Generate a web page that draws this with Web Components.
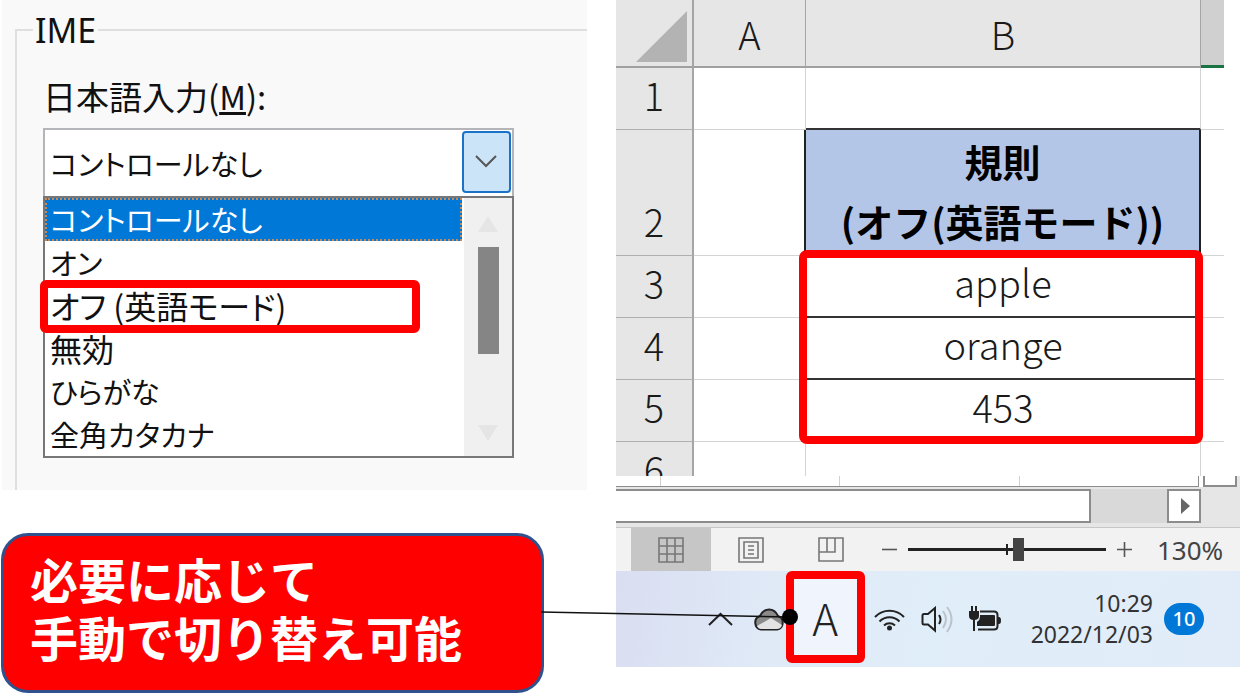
<!DOCTYPE html>
<html lang="ja">
<head>
<meta charset="utf-8">
<title>IME</title>
<style>
  * { box-sizing: border-box; }
  body {
    margin: 0;
    background: #fff;
    color: #1a1a1a;
    font-family: "Noto Sans CJK JP", sans-serif;
  }
  main {
    display: grid;
    grid-template-columns: 587fr 624fr;
    column-gap: 29px;
    align-items: start;
    overflow: hidden;
  }
  .left { position: relative; z-index: 1; min-width: 0; }
  .right { min-width: 0; }
</style>
</head>
<body>
<main>
  <div class="left">
    <ime-panel></ime-panel>
    <note-callout>必要に応じて<br>手動で切り替え可能</note-callout>
  </div>
  <div class="right">
    <sheet-grid></sheet-grid>
    <sheet-scroll></sheet-scroll>
    <status-bar></status-bar>
    <task-bar></task-bar>
  </div>
</main>

<script>
class ImePanel extends HTMLElement {
  connectedCallback() {
    this.attachShadow({ mode: 'open' });
    this.shadowRoot.innerHTML = `
      <style>
        * { box-sizing: border-box; }
        :host {
          display: block;
          margin-left: 2px;
          padding: 11px 0 0 13px;
          background: #f9f9f9;
          color: #111;
          font-size: 33px;
        }
        fieldset {
          margin: 0;
          padding: 27px 0 32px 26px;
          border: 2px solid #dfdfdf;
          border-width: 2px 0 0 2px;
          min-width: 0;
        }
        legend {
          margin-left: -10px;
          padding: 0 2px;
          font: 34px/38px "Noto Sans", sans-serif;
        }
        label { display: block; line-height: 40px; margin-bottom: 12px; }
        .field { position: relative; width: 471px; max-width: 100%; }
        select {
          display: block;
          width: 100%;
          height: 68px;
          padding: 0 60px 0 5px;
          appearance: none;
          border: 2px solid #b3b5b9;
          border-bottom: 0;
          border-radius: 0;
          background: #fff;
          color: inherit;
          font: 29px/40px "Noto Sans CJK JP", sans-serif;
          font-feature-settings: "palt";
        }
        .arrow {
          position: absolute;
          top: 3px;
          right: 3px;
          width: 49px;
          height: 62px;
          border: 2px solid #1a73c7;
          border-radius: 4px;
          background: #cce4f7;
          pointer-events: none;
        }
        .drop {
          display: flex;
          width: 471px;
          max-width: 100%;
          border: 2px solid #777;
          background: #fff;
        }
        ul {
          flex: 1;
          margin: 0;
          padding: 0;
          list-style: none;
          font-size: 29px;
          font-feature-settings: "palt";
        }
        li {
          position: relative;
          height: 43px;
          padding-left: 5px;
          line-height: 43px;
          white-space: nowrap;
        }
        .kanji { font-size: 32px; }
        li[aria-selected="true"] {
          background: #0078d7;
          color: #fff;
          outline: 2px dotted #c98a5a;
          outline-offset: -2px;
        }
        .mark {
          position: absolute;
          top: -4px;
          left: -5px;
          width: 380px;
          height: 53px;
          border: 8px solid #f00;
          border-radius: 6px;
        }
        .scroll {
          display: flex;
          flex-direction: column;
          align-items: center;
          width: 48px;
          margin-left: 2px;
          padding: 17px 0 14px;
          background: #f0f0f0;
        }
        .thumb { width: 21px; height: 107px; margin: 14px 0 auto; background: #858585; }
      </style>
      <fieldset>
        <legend>IME</legend>
        <label for="mode">日本語入力(<u>M</u>):</label>
        <div class="field">
          <select id="mode"><option>コントロールなし</option></select>
          <svg class="arrow" viewBox="0 0 45 58" aria-hidden="true">
            <path d="M12 23l10 10 10-10" fill="none" stroke="#555" stroke-width="2"/>
          </svg>
        </div>
        <div class="drop">
          <ul role="listbox" aria-label="日本語入力">
            <li role="option" aria-selected="true">コントロールなし</li>
            <li role="option">オン</li>
            <li role="option" class="kanji">オフ (英語モード)<span class="mark"></span></li>
            <li role="option" class="kanji">無効</li>
            <li role="option">ひらがな</li>
            <li role="option">全角カタカナ</li>
          </ul>
          <div class="scroll">
            <svg width="22" height="18"><path d="M1 17L11 1l10 16z" fill="#e5e5e5"/></svg>
            <div class="thumb"></div>
            <svg width="22" height="18"><path d="M1 1h20L11 17z" fill="#e5e5e5"/></svg>
          </div>
        </div>
      </fieldset>
    `;
  }
}
customElements.define('ime-panel', ImePanel);

class NoteCallout extends HTMLElement {
  connectedCallback() {
    this.attachShadow({ mode: 'open' });
    this.shadowRoot.innerHTML = `
      <style>
        :host {
          display: block;
          position: relative;
          box-sizing: border-box;
          margin: 43px 43px 0 1px;
          padding: 18px 0 20px 26px;
          border: 3px solid #2f528f;
          border-radius: 27px;
          background: #f00;
          color: #fff;
          font-family: "Liberation Sans", "Noto Sans CJK JP", sans-serif;
          font-size: 48px;
          font-weight: 700;
          line-height: 58px;
          white-space: nowrap;
        }
        svg { position: absolute; top: 68px; left: 100%; }
      </style>
      <slot></slot>
      <svg width="260" height="26" aria-hidden="true">
        <path d="M0 8L249 13" stroke="#111" stroke-width="1.4"/>
        <circle cx="249" cy="13" r="8" fill="#000"/>
      </svg>
    `;
  }
}
customElements.define('note-callout', NoteCallout);

class SheetGrid extends HTMLElement {
  connectedCallback() {
    this.attachShadow({ mode: 'open' });
    this.shadowRoot.innerHTML = `
      <style>
        * { box-sizing: border-box; }
        :host {
          display: block;
          height: 476px;
          margin-right: 16px;
          overflow: hidden;
          font-size: 38px;
          font-weight: 300;
        }
        table { width: 100%; table-layout: fixed; border-collapse: separate; border-spacing: 0; }
        .c0 { width: 78px; }
        .c1 { width: 112px; }
        .c3 { width: 23px; }
        tr { height: 62px; }
        thead tr { height: 68px; }
        th, td { padding: 0 0 8px; line-height: 52px; text-align: center; vertical-align: bottom; }
        th {
          background: #e6e6e6;
          font-weight: 300;
          border-right: 2px solid #a5a5a5;
          border-bottom: 1px solid #b0b0b0;
        }
        thead th { padding: 0; border-bottom: 2px solid #a0a0a0; border-right-width: 1px; line-height: 64px; }
        thead th:first-child { border-right-width: 2px; }
        thead th.next { background: #d0d0d0; border-right: 0; border-bottom: 3px solid #1a7343; }
        .corner svg { display: block; margin: 0 4px 4px auto; }
        td { border-right: 1px solid #d4d4d4; border-bottom: 1px solid #d4d4d4; }
        td:last-child { border-right: 0; }
        .dark-bottom { border-bottom: 2px solid #333; }
        .dark-right { border-right: 2px solid #222; }
        .title { height: 126px; padding-bottom: 4px; background: #b4c6e7; color: #000; font-weight: 700; line-height: 60px; }
        .first { position: relative; }
        .mark {
          position: absolute;
          top: -6px;
          left: -7px;
          right: -3px;
          height: 194px;
          border: 8px solid #f00;
          border-radius: 8px;
        }
      </style>
      <table>
        <colgroup><col class="c0"><col class="c1"><col><col class="c3"></colgroup>
        <thead>
          <tr>
            <th class="corner"><svg width="52" height="51"><path d="M0 51L51 0v51z" fill="#b3b3b3"/></svg></th>
            <th>A</th><th>B</th><th class="next"></th>
          </tr>
        </thead>
        <tbody>
          <tr><th>1</th><td></td><td class="dark-bottom"></td><td></td></tr>
          <tr><th>2</th><td class="dark-right"></td><td class="title dark-right">規則<br>(オフ(英語モード))</td><td></td></tr>
          <tr><th>3</th><td></td><td class="first dark-bottom">apple<span class="mark"></span></td><td></td></tr>
          <tr><th>4</th><td></td><td class="dark-bottom">orange</td><td></td></tr>
          <tr><th>5</th><td></td><td>453</td><td></td></tr>
          <tr><th>6</th><td></td><td></td><td></td></tr>
        </tbody>
      </table>
    `;
  }
}
customElements.define('sheet-grid', SheetGrid);

class SheetScroll extends HTMLElement {
  connectedCallback() {
    this.attachShadow({ mode: 'open' });
    this.shadowRoot.innerHTML = `
      <style>
        * { box-sizing: border-box; }
        :host { display: block; background: #e6e6e6; border-bottom: 1px solid #c6c6c6; }
        .edge { display: flex; height: 11px; padding-right: 3px; background: linear-gradient(90deg, #fff, #fff) 0 0 / calc(100% - 16px) 100% no-repeat; }
        .cells { flex: 1; display: flex; background: #fff; border: 1px solid #8c8c8c; border-width: 0 1px 1px 0; }
        .cells i { flex: 180 0 0; border-right: 1px solid #d0d0d0; }
        .cells i:first-child { flex-grow: 44; }
        .cells i:last-child { border: 0; }
        .end { width: 34px; margin-left: 4px; background: #fff; border: 2px solid #8c8c8c; border-top: 0; }
        .track { display: flex; height: 34px; margin: 2px 39px 4px 0; background: #d9d9d9; }
        .bar { flex: 1; background: #fff; border: 2px solid #8c8c8c; border-left: 0; }
        button {
          width: 34px;
          margin-left: 76px;
          padding: 0 0 0 3px;
          background: #fff;
          border: 2px solid #8c8c8c;
        }
        svg { display: block; margin: auto; }
      </style>
      <div class="edge">
        <div class="cells"><i></i><i></i><i></i><i></i></div>
        <div class="end"></div>
      </div>
      <div class="track">
        <div class="bar"></div>
        <button aria-label="右へスクロール"><svg width="9" height="16"><path d="M0 0l9 8-9 8z" fill="#666"/></svg></button>
      </div>
    `;
  }
}
customElements.define('sheet-scroll', SheetScroll);

class StatusBar extends HTMLElement {
  connectedCallback() {
    this.attachShadow({ mode: 'open' });
    this.shadowRoot.innerHTML = `
      <style>
        * { box-sizing: border-box; }
        :host {
          display: flex;
          align-items: center;
          height: 43px;
          padding: 0 15px;
          background: #f2f2f2;
        }
        button { flex: none; padding: 0; border: 0; background: none; }
        .view { width: 80px; height: 43px; }
        .view[aria-pressed="true"] { background: #c6c6c6; }
        .step { width: 15px; height: 15px; }
        .minus { margin-left: 11px; }
        svg { display: block; margin: auto; fill: none; stroke: #777; stroke-width: 1.6; }
        input {
          flex: 1;
          min-width: 0;
          height: 23px;
          margin: 0 11px;
          appearance: none;
          background:
            linear-gradient(#222, #222) 50% 50% / 2px 11px no-repeat,
            linear-gradient(#222, #222) 0 50% / 100% 3px no-repeat;
        }
        input::-webkit-slider-thumb { appearance: none; width: 11px; height: 23px; background: #444; border: 0; }
        output {
          width: 68px;
          margin-left: 25px;
          color: #444;
          font: 26px/30px "Noto Sans", sans-serif;
        }
      </style>
      <button class="view" aria-label="標準" aria-pressed="true">
        <svg width="26" height="26"><path d="M1 1h24v24H1zM9 1v24M17 1v24M1 9h24M1 17h24"/></svg>
      </button>
      <button class="view" aria-label="ページ レイアウト">
        <svg width="26" height="26"><path d="M1 1h24v24H1zM6 5h14v16H6zM10 9h6M10 13h6M10 17h6"/></svg>
      </button>
      <button class="view" aria-label="改ページ プレビュー">
        <svg width="26" height="26"><path d="M1 1h24v23H1zM1 15h16V1M9 1v14"/></svg>
      </button>
      <button class="step minus" aria-label="縮小"><svg width="15" height="15"><path d="M0 7.500h15" stroke="#555"/></svg></button>
      <input type="range" min="0" max="100" value="56" aria-label="ズーム">
      <button class="step" aria-label="拡大"><svg width="15" height="15"><path d="M0 7.500h15M7.500 0v15" stroke="#555"/></svg></button>
      <output>130%</output>
    `;
  }
}
customElements.define('status-bar', StatusBar);

class TaskBar extends HTMLElement {
  connectedCallback() {
    this.attachShadow({ mode: 'open' });
    this.shadowRoot.innerHTML = `
      <style>
        * { box-sizing: border-box; }
        :host {
          display: flex;
          justify-content: flex-end;
          align-items: center;
          height: 96px;
          padding-right: 36px;
          background: linear-gradient(100deg, #d9def1, #e0eaf7 25%, #e0eef9 50%, #e1ecf8);
          color: #333;
          font-family: "Noto Sans", sans-serif;
        }
        button { flex: none; padding: 0; border: 0; background: none; color: inherit; }
        svg { display: block; fill: none; stroke: #222; stroke-width: 2; }
        .cloud { margin: 0 1px 0 20px; }
        .ime {
          align-self: flex-start;
          width: 79px;
          height: 92px;
          margin-right: 8px;
          border: 8px solid #f00;
          border-radius: 6px;
          background: #f0f5fd;
          font: 300 44px/76px "Noto Sans CJK JP", sans-serif;
          color: #222;
        }
        .sound { margin: 0 16px 0 15px; }
        time { margin: 0 11px 0 29px; font-size: 23px; line-height: 31px; text-align: right; }
        .badge {
          width: 40px;
          height: 32px;
          border-radius: 16px;
          background: #0078d7;
          color: #fff;
          font: 500 20px/32px "Noto Sans", sans-serif;
        }
      </style>
      <button aria-label="隠れているインジケーター"><svg width="25" height="14"><path d="M1 13L12.500 2 24 13"/></svg></button>
      <button class="cloud" aria-label="OneDrive">
        <svg width="32" height="23" viewBox="0 0 32 23">
          <path d="M8 21.500a7 7 0 0 1-1-13.500C9 3.500 12 1.500 16 1.500s7 2 9 6.500a7 7 0 0 1-1 13.500z" fill="#8a8a8a"/>
          <path d="M4 18l14-8 11 7c-1 3-3 4-5 4H8c-2 0-3-1-4-3z" fill="#e3e3e3" stroke="none"/>
        </svg>
      </button>
      <button class="ime" aria-label="入力モード">A</button>
      <button aria-label="ネットワーク">
        <svg width="33" height="24" viewBox="0 0 33 24">
          <path d="M2 10a20 20 0 0 1 29 0M6.500 14.500a14 14 0 0 1 20 0M11 18.500a8 8 0 0 1 11 0"/>
          <circle cx="16.500" cy="21" r="2.500" fill="#222" stroke="none"/>
        </svg>
      </button>
      <button class="sound" aria-label="音量">
        <svg width="32" height="27" viewBox="0 0 32 27">
          <path d="M1.500 9.500V17q0 1.500 1.500 1.500h4l7 6V2L7 8H3q-1.500 0-1.500 1.500zM18 9q3 4.500 0 9"/>
          <path d="M22 5q6 8 0 17M26 1q9 12 0 25" stroke="#bcc3cc"/>
        </svg>
      </button>
      <button aria-label="バッテリー">
        <svg width="33" height="26" viewBox="0 0 33 26">
          <path d="M11 5.500h14q3.500 0 3.500 3.500v11q0 3.500-3.500 3.500H9"/>
          <path d="M11 9h14q1 0 1 1v9q0 1-1 1H8v-4q3-2 3-5zM29 11h1q2 0 2 3.500T30 18h-1zM0 5h10v5q0 4-5 4t-5-4z" fill="#222" stroke="none"/>
          <path d="M3 0v6M7 0v6M5 13v12"/>
        </svg>
      </button>
      <time datetime="2022-12-03T10:29">10:29<br>2022/12/03</time>
      <button class="badge" aria-label="通知">10</button>
    `;
  }
}
customElements.define('task-bar', TaskBar);
</script>
</body>
</html>
